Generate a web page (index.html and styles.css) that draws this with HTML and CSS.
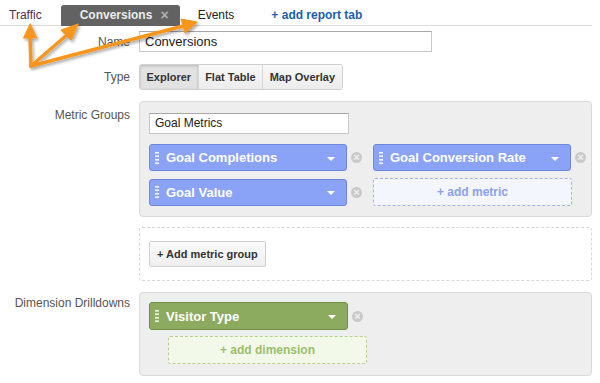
FILE: index.html
```html
<!DOCTYPE html>
<html>
<head>
<meta charset="utf-8">
<link rel="stylesheet" href="styles.css">
</head>
<body>
<div class="page">
  <div class="tabs">
    <span class="tab tab-traffic">Traffic</span>
    <span class="tab tab-active">Conversions <span class="tab-close">×</span></span>
    <span class="tab tab-events">Events</span>
    <span class="tab tab-add">+ add report tab</span>
  </div>

  <div class="form">
    <div class="row row-name">
      <div class="label">Name</div>
      <div class="field"><div class="text-input name-input">Conversions</div></div>
    </div>
    <div class="row row-type">
      <div class="label">Type</div>
      <div class="field">
        <div class="seg">
          <span class="seg-btn seg-on">Explorer</span>
          <span class="seg-btn">Flat Table</span>
          <span class="seg-btn">Map Overlay</span>
        </div>
      </div>
    </div>
    <div class="row row-metrics">
      <div class="label label-box">Metric Groups</div>
      <div class="field">
        <div class="box metric-box">
          <div class="text-input group-input">Goal Metrics</div>
          <div class="pill-grid">
            <div class="item">
              <div class="pill pill-blue"><span class="grip"></span><span class="pill-text">Goal Completions</span><span class="caret"></span></div>
              <span class="remove">×</span>
            </div>
            <div class="item">
              <div class="pill pill-blue"><span class="grip"></span><span class="pill-text">Goal Conversion Rate</span><span class="caret"></span></div>
              <span class="remove">×</span>
            </div>
            <div class="item">
              <div class="pill pill-blue"><span class="grip"></span><span class="pill-text">Goal Value</span><span class="caret"></span></div>
              <span class="remove">×</span>
            </div>
            <div class="item">
              <div class="add add-blue">+ add metric</div>
            </div>
          </div>
        </div>
      </div>
    </div>
    <div class="row row-addgroup">
      <div class="label"></div>
      <div class="field">
        <div class="dashed-box">
          <span class="plain-btn">+ Add metric group</span>
        </div>
      </div>
    </div>
    <div class="row row-dims">
      <div class="label label-box2">Dimension Drilldowns</div>
      <div class="field">
        <div class="box dim-box">
          <div class="item">
            <div class="pill pill-green"><span class="grip"></span><span class="pill-text">Visitor Type</span><span class="caret"></span></div>
            <span class="remove">×</span>
          </div>
          <div class="add add-green">+ add dimension</div>
        </div>
      </div>
    </div>
  </div>

  <svg class="arrows" width="220" height="80" viewBox="0 0 220 80">
    <defs>
      <filter id="sh" x="-20%" y="-20%" width="140%" height="140%">
        <feDropShadow dx="1.5" dy="2" stdDeviation="1.5" flood-color="#000" flood-opacity="0.35"/>
      </filter>
    </defs>
    <g filter="url(#sh)" fill="#f7961e" stroke="#f7961e" stroke-width="3.5" stroke-linecap="round">
      <line x1="31" y1="66" x2="30" y2="37"/>
      <polygon points="30,24 23.5,38 36.5,38" stroke-width="1"/>
      <line x1="31" y1="66" x2="68" y2="34"/>
      <polygon points="78,24 61,30 71,40" stroke-width="1"/>
      <line x1="31" y1="66" x2="183" y2="26"/>
      <polygon points="197,22 181,19 185,33" stroke-width="1"/>
    </g>
  </svg>
</div>
</body>
</html>
```

FILE: styles.css
```css
html, body {
  margin: 0;
  padding: 0;
  background: #fff;
}
body {
  font-family: "Liberation Sans", Arial, sans-serif;
  width: 600px;
  height: 383px;
  overflow: hidden;
}
.page {
  position: relative;
  width: 600px;
  height: 383px;
}
.tabs {
  display: flex;
  align-items: flex-end;
  height: 26px;
  width: 592px;
  border-bottom: 1px solid #dcdcdc;
  box-sizing: border-box;
  font-size: 12px;
}
.tab {
  line-height: 20px;
  height: 20px;
}
.tab-traffic {
  margin-left: 9px;
  color: #4e2b57;
  margin-right: 19px;
}
.tab-active {
  background: #626262;
  color: #ececec;
  font-weight: bold;
  border-radius: 3px 3px 0 0;
  padding: 0 11px 0 19px;
  width: 89px;
  display: flex;
  justify-content: space-between;
  margin-bottom: -1px;
  height: 21px;
}
.tab-close {
  color: #b0b0b0;
  font-size: 14px;
  font-weight: bold;
}
.tab-events {
  color: #222;
  margin-left: 18px;
}
.tab-add {
  margin-left: 37px;
  color: #1f5ea8;
  font-weight: bold;
}

.form {
  display: flex;
  flex-direction: column;
}
.row {
  display: grid;
  grid-template-columns: 130px 453px;
  column-gap: 9px;
}
.label {
  text-align: right;
  font-size: 12px;
  color: #555;
  align-self: center;
}
.label-box {
  align-self: start;
  padding-top: 7px;
}
.label-box2 {
  align-self: start;
  padding-top: 4px;
}
.row-name { margin-top: 5px; }
.row-type { margin-top: 12px; }
.row-metrics { margin-top: 11px; }
.row-addgroup { margin-top: 10px; }
.row-dims { margin-top: 11px; }

.text-input {
  box-sizing: border-box;
  height: 21px;
  border: 1px solid #c8c8c8;
  border-top-color: #a8a8a8;
  background: #fff;
  font-size: 13px;
  color: #222;
  line-height: 19px;
  padding-left: 5px;
}
.name-input { width: 293px; }
.group-input { width: 200px; font-size: 12px; }

.seg {
  display: inline-flex;
  border: 1px solid #d0d0d0;
  border-radius: 3px;
  height: 26px;
  box-sizing: border-box;
  overflow: hidden;
}
.seg-btn {
  font-size: 11px;
  font-weight: bold;
  color: #333;
  line-height: 24px;
  padding: 0 6.5px;
  background: linear-gradient(#f8f8f8, #ececec);
  border-left: 1px solid #d6d6d6;
}
.seg-btn:first-child { border-left: none; }
.seg-on {
  background: #e2e2e2;
  box-shadow: inset 0 1px 3px rgba(0,0,0,0.18);
}

.box {
  background: #eeeeee;
  border: 1px solid #dadada;
  border-radius: 4px;
  box-sizing: border-box;
  width: 453px;
}
.metric-box {
  height: 116px;
  padding: 11px 10px 0 9px;
}
.pill-grid {
  display: grid;
  grid-template-columns: 224px 216px;
  row-gap: 7px;
  margin-top: 10px;
}
.item {
  display: flex;
  align-items: center;
}
.pill {
  box-sizing: border-box;
  width: 198px;
  height: 27px;
  border-radius: 3px;
  display: flex;
  align-items: center;
  color: #fff;
  font-size: 13px;
  font-weight: bold;
}
.pill-blue {
  background: #8aa3f6;
  border: 1px solid #6d86df;
}
.pill-green {
  background: #8dab5f;
  border: 1px solid #6f8d44;
  width: 199px;
  height: 28px;
}
.grip {
  width: 4px;
  height: 14px;
  margin-left: 5px;
  margin-right: 7px;
  background-image: radial-gradient(circle, rgba(255,255,255,0.85) 0.9px, transparent 1.1px);
  background-size: 2px 3.5px;
}
.pill-text {
  flex: 1;
  white-space: nowrap;
}
.caret {
  width: 0;
  height: 0;
  border-left: 4.5px solid transparent;
  border-right: 4.5px solid transparent;
  border-top: 4.5px solid #fff;
  margin-right: 11px;
  margin-top: 2px;
}
.remove {
  width: 11px;
  height: 11px;
  border-radius: 50%;
  background: #c9c9c9;
  color: #f2f2f2;
  font-size: 11px;
  font-weight: bold;
  line-height: 10px;
  text-align: center;
  margin-left: 4px;
}
.add {
  box-sizing: border-box;
  width: 199px;
  height: 28px;
  border-radius: 2px;
  font-size: 12px;
  font-weight: bold;
  text-align: center;
  line-height: 26px;
}
.add-blue {
  border: 1px dashed #9fb3ee;
  background: #f3f6fd;
  color: #8ba1ee;
}
.add-green {
  border: 1px dashed #b7d08e;
  background: #f3f9e8;
  color: #9dbd6e;
  margin-left: 19px;
  margin-top: 6px;
}

.dashed-box {
  box-sizing: border-box;
  width: 453px;
  height: 54px;
  border: 1px dashed #d8d8d8;
  border-radius: 3px;
  padding: 13px 0 0 9px;
}
.plain-btn {
  display: inline-block;
  box-sizing: border-box;
  height: 26px;
  line-height: 24px;
  padding: 0 7px;
  border: 1px solid #cfcfcf;
  border-radius: 2px;
  background: linear-gradient(#fafafa, #efefef);
  font-size: 11px;
  font-weight: bold;
  color: #333;
}

.dim-box {
  height: 84px;
  padding: 9px 0 0 9px;
}

.arrows {
  position: absolute;
  left: 0;
  top: 0;
  pointer-events: none;
}
```
